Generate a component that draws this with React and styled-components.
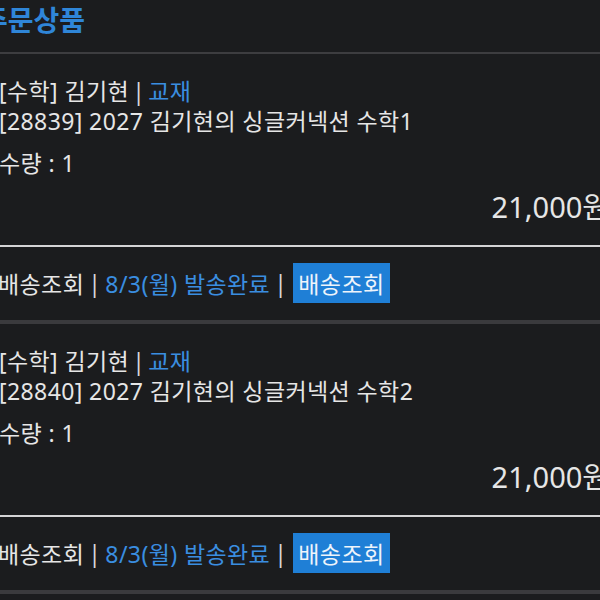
import React from "react";
import styled, { createGlobalStyle } from "styled-components";

const Global = createGlobalStyle`
  html, body { margin: 0; padding: 0; background: #1b1c1e; }
  body { overflow: hidden; font-family: "Noto Sans", "Noto Sans CJK KR", sans-serif; }
`;

const Page = styled.div`
  width: 618px;
  margin-left: -8px;
  background: #1b1c1e;
  color: #e6e6e6;
`;

const Header = styled.div`
  height: 52px;
  display: flex;
  align-items: center;
  border-bottom: 2px solid #3d3d40;
`;

const Title = styled.h2`
  margin: -12px 0 0 -10px;
  font-size: 28px;
  font-weight: 700;
  color: #2f86d8;
  line-height: 40px;
`;

const Item = styled.div`
  border-top: ${(p) => (p.$first ? "0" : "4px solid #3a3a3d")};
`;

const Body = styled.div`
  padding: 22px 1px 23px 7px;
  border-bottom: 2px solid #d4d4d6;
`;

const Line = styled.div`
  font-size: 23px;
  letter-spacing: 0.4px;
  line-height: 30px;
  white-space: nowrap;
  margin-top: ${(p) => p.$gap || 0}px;
`;

const Blue = styled.span`
  color: #3a8ee0;
`;

const Bar = styled.span`
  color: #d8d8d8;
  margin: 0 ${(p) => p.$space || 4}px;
`;

const Price = styled.div`
  font-size: 29px;
  line-height: 30px;
  text-align: right;
  margin-top: 14px;
  white-space: nowrap;
`;

const Row = styled.div`
  display: flex;
  align-items: center;
  padding: 16px 8px 17px 6px;
  font-size: 23px;
  letter-spacing: 0.4px;
  white-space: nowrap;
`;

const Button = styled.button`
  font: inherit;
  font-size: 23px;
  letter-spacing: 0.4px;
  height: 40px;
  padding: 0 5px;
  border: 0;
  background: #1f7fd6;
  color: #eef4fb;
  margin-left: 2px;
`;

const items = [
  { code: "28839", name: "2027 김기현의 싱글커넥션 수학1" },
  { code: "28840", name: "2027 김기현의 싱글커넥션 수학2" },
];

export default function App() {
  return (
    <Page>
      <Global />
      <Header>
        <Title>주문상품</Title>
      </Header>
      {items.map((it, i) => (
        <Item key={it.code} $first={i === 0}>
          <Body>
            <Line>
              [수학] 김기현<Bar $space={3}>|</Bar>
              <Blue>교재</Blue>
            </Line>
            <Line>
              [{it.code}] {it.name}
            </Line>
            <Line $gap={12}>수량 : 1</Line>
            <Price>21,000원</Price>
          </Body>
          <Row>
            배송조회<Bar $space={4}>|</Bar>
            <Blue>8/3(월) 발송완료</Blue>
            <Bar $space={4}>|</Bar>
            <Button>배송조회</Button>
          </Row>
        </Item>
      ))}
      <Item />
    </Page>
  );
}
